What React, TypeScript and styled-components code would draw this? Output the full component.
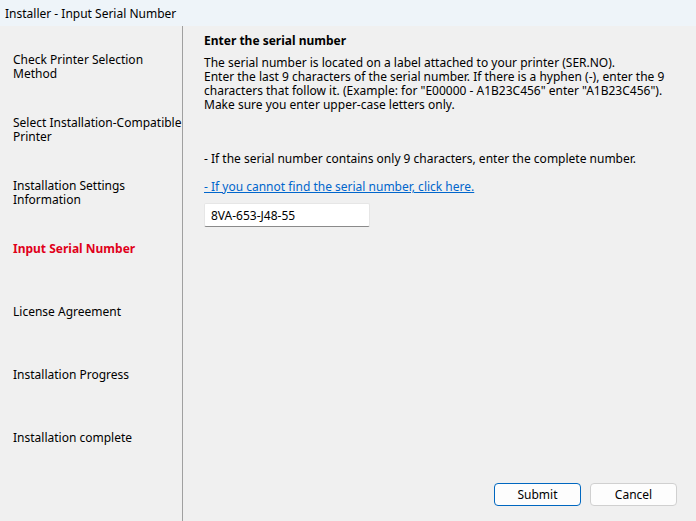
import styled, { createGlobalStyle } from "styled-components";

const GlobalStyle = createGlobalStyle`
    html, body {
        margin: 0;
        padding: 0;
        background: #f0f0f0;
    }
    body {
        font-family: "Noto Sans", "Open Sans", sans-serif;
        font-size: 12px;
        color: #000;
    }
`;

const Window = styled.div`
    width: 696px;
    height: 521px;
    display: flex;
    flex-direction: column;
    background: #f0f0f0;
    overflow: hidden;
`;

const TitleBar = styled.div`
    height: 26px;
    flex: none;
    display: flex;
    align-items: center;
    padding-left: 5px;
    background: #eef4f9;
    font-size: 12px;
`;

const Body = styled.div`
    flex: 1;
    display: flex;
    min-height: 0;
`;

const Sidebar = styled.nav`
    width: 183px;
    flex: none;
    border-right: 1px solid #a0a0a0;
    padding-top: 27px;
    box-sizing: border-box;
`;

const Step = styled.div<{ $active?: boolean }>`
    height: 63px;
    padding-left: 13px;
    line-height: 14px;
    white-space: nowrap;
    color: ${(p) => (p.$active ? "#e0001a" : "#000")};
    font-weight: ${(p) => (p.$active ? 700 : 400)};
`;

const Main = styled.main`
    flex: 1;
    display: flex;
    flex-direction: column;
    padding: 8px 19px 15px 21px;
    line-height: 14px;
`;

const Heading = styled.div`
    font-weight: 700;
`;

const Paragraph = styled.p`
    margin: 8px 0 0;
`;

const Note = styled.p`
    margin: 40px 0 0;
`;

const HelpLink = styled.a`
    margin-top: 14px;
    color: #0066cc;
    text-decoration: underline;
    cursor: pointer;
    align-self: flex-start;
`;

const SerialInput = styled.input`
    margin-top: 9px;
    width: 166px;
    height: 24px;
    box-sizing: border-box;
    padding: 0 6px;
    border: 1px solid #e6e6e6;
    border-bottom-color: #8a8a8a;
    border-radius: 2px;
    background: #fff;
    font: inherit;
    color: #000;
    outline: none;
`;

const Footer = styled.div`
    margin-top: auto;
    display: flex;
    justify-content: flex-end;
    gap: 9px;
`;

const Button = styled.button<{ $primary?: boolean }>`
    width: 87px;
    height: 23px;
    box-sizing: border-box;
    border-radius: 4px;
    border: 1px solid ${(p) => (p.$primary ? "#0067c0" : "#d0d0d0")};
    background: #fdfdfd;
    font: inherit;
    color: #000;
    padding: 0;
`;

const steps = [
    ["Check Printer Selection", "Method"],
    ["Select Installation-Compatible", "Printer"],
    ["Installation Settings", "Information"],
    ["Input Serial Number"],
    ["License Agreement"],
    ["Installation Progress"],
    ["Installation complete"],
];

export default function App() {
    return (
        <>
            <GlobalStyle />
            <Window>
                <TitleBar>Installer - Input Serial Number</TitleBar>
                <Body>
                    <Sidebar>
                        {steps.map((lines) => (
                            <Step key={lines[0]} $active={lines[0] === "Input Serial Number"}>
                                {lines.map((l, i) => (
                                    <div key={i}>{l}</div>
                                ))}
                            </Step>
                        ))}
                    </Sidebar>
                    <Main>
                        <Heading>Enter the serial number</Heading>
                        <Paragraph>
                            The serial number is located on a label attached to your printer (SER.NO).
                            <br />
                            Enter the last 9 characters of the serial number. If there is a hyphen (-), enter the 9
                            characters that follow it. (Example: for "E00000 - A1B23C456" enter "A1B23C456").
                            <br />
                            Make sure you enter upper-case letters only.
                        </Paragraph>
                        <Note>- If the serial number contains only 9 characters, enter the complete number.</Note>
                        <HelpLink>- If you cannot find the serial number, click here.</HelpLink>
                        <SerialInput defaultValue="8VA-653-J48-55" />
                        <Footer>
                            <Button $primary>Submit</Button>
                            <Button>Cancel</Button>
                        </Footer>
                    </Main>
                </Body>
            </Window>
        </>
    );
}
